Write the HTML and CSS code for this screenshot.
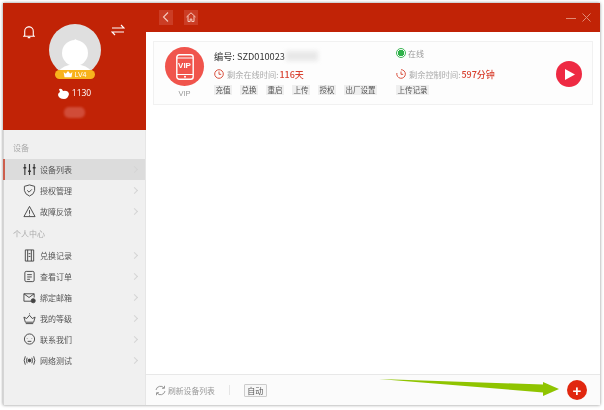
FILE: index.html
```html
<!DOCTYPE html>
<html lang="zh">
<head>
<meta charset="utf-8">
<title>设备列表</title>
<link rel="stylesheet" href="styles.css">
</head>
<body>
<div class="window">
  <aside class="sidebar">
    <div class="profile">
      <div class="profile-icons">
        <svg class="ic-bell" width="12" height="14" viewBox="0 0 14 16" fill="none" stroke="#fff" stroke-width="1.300"><path d="M2 12V7a5 5 0 0 1 10 0v5l1 1H1zM5.500 14.500h3M7 2V1"/></svg>
        <svg class="ic-swap" width="14" height="12" viewBox="0 0 14 12" fill="none" stroke="#fff" stroke-width="1.200"><path d="M1 4h12L10 1M13 8H1l3 3"/></svg>
      </div>
      <div class="avatar">
        <svg width="52" height="46" viewBox="0 0 52 46"><circle cx="26" cy="23" r="13" fill="#fff"/><path d="M26 9q3 1 3 3l-4-1z" fill="#fff"/><path d="M8 46q2-9 12-11h12q10 2 12 11z" fill="#fff"/></svg>
      </div>
      <div class="level">
        <svg width="10" height="7" viewBox="0 0 10 8" fill="#fff"><path d="M0 1l2.500 2L5 0l2.500 3L10 1 9 7H1z"/></svg>
        <span>LV4</span>
      </div>
      <div class="coins">
        <svg width="11" height="11" viewBox="0 0 11 11" fill="#fff"><path d="M1 1q3-1 4 2 5-1 6 3-1 5-5 5-5 0-6-4 0-2 2-3z"/></svg>
        <span>1130</span>
      </div>
      <div class="redacted"></div>
    </div>
    <nav class="menu">
      <div class="section">设备</div>
      <a class="item active">
        <svg class="icon" viewBox="0 0 14 14" fill="none" stroke="#333" stroke-width="1.200"><path d="M2 1v12M7 1v12M12 1v12"/><path d="M.5 5h3M5.500 9h3M10.500 5h3" stroke-width="1.600"/></svg>
        <span>设备列表</span><i class="chev"></i></a>
      <a class="item">
        <svg class="icon" viewBox="0 0 14 14" fill="none" stroke="#444"><path d="M7 1l5.500 1.500V7Q12 11 7 13 2 11 1.500 7V2.500z"/><path d="M4.500 6.800l2 2 3-3"/></svg>
        <span>授权管理</span><i class="chev"></i></a>
      <a class="item">
        <svg class="icon" viewBox="0 0 14 14" fill="none" stroke="#444"><path d="M7 1.500L13 12.500H1zM7 5.500v4M7 10.500v1"/></svg>
        <span>故障反馈</span><i class="chev"></i></a>
      <div class="section second">个人中心</div>
      <a class="item">
        <svg class="icon" viewBox="0 0 14 14" fill="none" stroke="#444"><path d="M2.500 1h9v12h-9zM5 1v12M9 1v12M6 5h2M6 8h2"/></svg>
        <span>兑换记录</span><i class="chev"></i></a>
      <a class="item">
        <svg class="icon" viewBox="0 0 14 14" fill="none" stroke="#444"><rect x="2" y="1.500" width="10" height="11" rx="1.500"/><path d="M4.500 5h5M4.500 7.500h5M4.500 10h3"/></svg>
        <span>查看订单</span><i class="chev"></i></a>
      <a class="item">
        <svg class="icon" viewBox="0 0 14 14" fill="none" stroke="#444"><path d="M9 11H1V3h11v4M1 3l5.500 4L12 3"/><circle cx="11" cy="10.500" r="2.200" fill="#444"/></svg>
        <span>绑定邮箱</span><i class="chev"></i></a>
      <a class="item">
        <svg class="icon" viewBox="0 0 14 14" fill="none" stroke="#444"><path d="M1 5.500l3 1.500 3-3.500 3 3.500 3-1.500-1.500 5.500h-9zM7 1.500v1M3 12.500h8"/></svg>
        <span>我的等级</span><i class="chev"></i></a>
      <a class="item">
        <svg class="icon" viewBox="0 0 14 14" fill="none" stroke="#444"><circle cx="7" cy="6.500" r="5.500"/><path d="M4.500 5.500v.5M9.500 5.500v.5M5 9h4"/></svg>
        <span>联系我们</span><i class="chev"></i></a>
      <a class="item">
        <svg class="icon" viewBox="0 0 14 14" fill="none" stroke="#444"><circle cx="7" cy="7" r="1.500" fill="#444"/><path d="M4.500 4Q3 7 4.500 10M9.500 4Q11 7 9.500 10M2.500 2.500Q0 7 2.500 11.500M11.500 2.500Q14 7 11.500 11.500"/></svg>
        <span>网络测试</span><i class="chev"></i></a>
    </nav>
  </aside>
  <main class="main">
    <header class="titlebar">
      <div class="nav-btns">
        <button class="nav-btn"><svg width="8" height="10" viewBox="0 0 8 10" fill="none" stroke="#f6c9bd" stroke-width="1.100"><path d="M6 .5L1.500 5 6 9.500"/></svg></button>
        <button class="nav-btn"><svg width="10" height="10" viewBox="0 0 10 10" fill="none" stroke="#f6c9bd"><path d="M.5 5L5 .8 9.500 5M2 4v5.500h2.200V7h1.600v2.500H8V4"/></svg></button>
      </div>
      <div class="win-btns">
        <svg width="10" height="10" viewBox="0 0 10 10" stroke="#e08a74"><path d="M0 5.500h10"/></svg>
        <svg width="9" height="9" viewBox="0 0 9 9" stroke="#e08a74"><path d="M.5.500l8 8M8.500.500l-8 8"/></svg>
      </div>
    </header>
    <section class="content">
      <article class="card">
        <div class="device">
          <div class="phone">
            <svg width="18" height="26" viewBox="0 0 18 26" fill="none"><rect x=".8" y=".8" width="16.400" height="24.400" rx="2.500" stroke="#fff" stroke-width="1.400"/><path d="M1 20.500h16M1 4h16" stroke="#fff"/><circle cx="9" cy="22.700" r="1" fill="#fff"/></svg>
            <span class="vip-mark">VIP</span>
          </div>
          <div class="vip-label">VIP</div>
        </div>
        <div class="col-a">
          <div class="serial">编号: SZD010023<span class="mask"></span></div>
          <div class="timer">
            <svg class="clock" viewBox="0 0 10 10" fill="none" stroke="#d9513f"><circle cx="5" cy="5" r="4.300"/><path d="M5 2.500V5.300H7.200"/></svg>
            <span>剩余在线时间:</span><b>116天</b>
          </div>
          <div class="tags">
            <span class="tag">充值</span><span class="tag">兑换</span><span class="tag">重启</span><span class="tag">上传</span><span class="tag">授权</span><span class="tag">出厂设置</span>
          </div>
        </div>
        <div class="col-b">
          <div class="status"><i class="dot"></i><span>在线</span></div>
          <div class="timer">
            <svg class="clock" viewBox="0 0 10 10" fill="none" stroke="#d9513f"><path d="M5 .7A4.300 4.300 0 1 1 .9 4"/><path d="M5 2.500V5.300H7.200"/></svg>
            <span>剩余控制时间:</span><b>597分钟</b>
          </div>
          <div class="tags"><span class="tag">上传记录</span></div>
        </div>
        <button class="play"><svg width="10" height="11" viewBox="0 0 10 11" fill="#fff"><path d="M0 0l10 5.500L0 11z"/></svg></button>
      </article>
    </section>
    <footer class="footer">
      <div class="refresh">
        <svg width="11" height="11" viewBox="0 0 11 11" fill="none" stroke="#999"><path d="M1 5a4.500 4.500 0 0 1 8-2M10 6a4.500 4.500 0 0 1-8 2M9.500 .8V3.300H7M1.500 10.200V7.700H4"/></svg>
        <span>刷新设备列表</span>
      </div>
      <span class="divider"></span>
      <span class="auto">自动</span>
      <button class="add">+</button>
    </footer>
  </main>
  <svg class="arrow" width="182" height="20" viewBox="0 0 182 20"><path d="M0 0L164 5.500V3L180 10 164 17V13.500Z" fill="#8fc400"/></svg>
</div>
</body>
</html>
```

FILE: styles.css
```css
* { box-sizing: border-box; }
html, body { margin: 0; height: 100%; }
body {
  background: #fff;
  padding: 3px 4px 5px 3px;
  font-family: "Noto Sans CJK SC", "Liberation Sans", sans-serif;
  overflow: hidden;
}
.window {
  position: relative;
  display: flex;
  height: 402px;
  background: #fff;
  box-shadow: 0 0 3px #8b8b8b;
  filter: blur(.25px);
}
.sidebar {
  width: 143px;
  flex: none;
  background: #f0f0f0;
  display: flex;
  flex-direction: column;
}
.profile {
  height: 127px;
  background: #c12306;
  display: flex;
  flex-direction: column;
  align-items: center;
  position: relative;
  padding-top: 21px;
}
.profile-icons {
  position: absolute;
  left: 0;
  right: 0;
  top: 0;
}
.ic-bell { position: absolute; left: 20px; top: 22px; }
.ic-swap { position: absolute; left: 108px; top: 21px; }
.avatar {
  width: 52px;
  height: 52px;
  border-radius: 50%;
  background: #dfdfdf;
  display: flex;
  align-items: flex-end;
  overflow: hidden;
}
.level {
  margin-top: -6px;
  z-index: 1;
  width: 40px;
  height: 9px;
  border-radius: 5px;
  background: #f8b31c;
  color: #fff;
  font: 7px/9px "Liberation Sans", sans-serif;
  display: flex;
  align-items: center;
  justify-content: center;
  gap: 2px;
}
.coins {
  margin-top: 8px;
  display: flex;
  align-items: center;
  gap: 3px;
  color: #fff;
  font: 8.500px/12px "Open Sans", sans-serif;
}
.redacted {
  width: 21px;
  height: 11px;
  margin-top: 8px;
  border-radius: 5px;
  background: #d04c38;
  filter: blur(1.200px);
}
.menu {
  flex: 1;
  padding-top: 11px;
  border-right: 1px solid #e6e6e6;
  border-left: 1px solid #d5d5d5;
}
.section {
  height: 15px;
  padding-left: 9px;
  color: #aaa;
  font-size: 8px;
  line-height: 14px;
}
.section.second {
  margin-top: 5px;
  margin-bottom: 1px;
}
.item {
  display: flex;
  align-items: center;
  height: 21px;
  padding-left: 19px;
  color: #555;
  font-size: 8px;
  position: relative;
}
.section + .item { margin-top: 3px; }
.item.active {
  background: #dcdcdc;
  box-shadow: inset 2px 0 #cd5f4d;
  margin-left: -1px;
  padding-left: 20px;
}
.icon {
  width: 13px;
  height: 13px;
  margin-right: 4px;
  flex: none;
}
.chev {
  position: absolute;
  right: 8px;
  top: 8px;
  width: 5px;
  height: 5px;
  border-top: 1px solid #d4d4d4;
  border-right: 1px solid #d4d4d4;
  transform: rotate(45deg);
}
.main {
  flex: 1;
  display: flex;
  flex-direction: column;
  min-width: 0;
}
.titlebar {
  height: 29px;
  background: #c12306;
  display: flex;
  align-items: center;
  justify-content: space-between;
  padding: 0 9px 0 13px;
  flex: none;
}
.nav-btns { display: flex; gap: 11px; margin-top: -1px; }
.nav-btn {
  width: 14px;
  height: 15px;
  padding: 0;
  border: 0;
  background: #cb3d25;
  display: flex;
  align-items: center;
  justify-content: center;
}
.win-btns { display: flex; align-items: center; gap: 6px; }
.content {
  flex: 1;
  padding: 9px 6px 0 7px;
  background: #fff;
}
.card {
  height: 64px;
  width: 440px;
  border: 1px solid #f1f1f1;
  background: #fdfdfd;
  display: flex;
  position: relative;
}
.device {
  width: 47px;
  flex: none;
  margin-left: 11px;
  padding-top: 5px;
}
.phone {
  width: 39px;
  height: 39px;
  border-radius: 50%;
  background: #f0544c;
  display: flex;
  align-items: center;
  justify-content: center;
  position: relative;
}
.vip-mark {
  position: absolute;
  left: 0;
  right: 0;
  top: 14px;
  text-align: center;
  color: #fff;
  font: bold 8px/10px "Liberation Sans", sans-serif;
}
.vip-label {
  width: 39px;
  text-align: center;
  color: #999;
  font: 7.500px/10px "Liberation Sans", sans-serif;
  margin-top: 3px;
}
.col-a {
  width: 182px;
  flex: none;
  margin-left: 2px;
  padding-top: 7px;
}
.col-b {
  flex: none;
  padding-top: 4px;
  width: 150px;
}
.serial {
  height: 14px;
  color: #333;
  font-size: 9.200px;
  line-height: 14px;
  position: relative;
  white-space: nowrap;
}
.mask {
  position: absolute;
  left: 72px;
  top: 2px;
  width: 32px;
  height: 10px;
  background: #e8e8e8;
  filter: blur(2px);
}
.status {
  height: 14px;
  display: flex;
  align-items: center;
  gap: 2px;
  color: #999;
  font-size: 8px;
}
.dot {
  width: 10px;
  height: 10px;
  border-radius: 50%;
  border: 1px solid #3eb655;
  background: radial-gradient(circle, #2fb24a 55%, #fff 60%);
}
.timer {
  display: flex;
  align-items: center;
  height: 12px;
  margin-top: 5px;
  color: #aaa;
  font-size: 8.200px;
  white-space: nowrap;
}
.col-b .timer { margin-top: 8px; }
.timer b {
  color: #d8402f;
  font-size: 9px;
  font-weight: 500;
  margin-left: 1px;
}
.clock {
  width: 10px;
  height: 10px;
  margin-right: 3px;
  flex: none;
}
.tags {
  display: flex;
  gap: 8px;
  margin-top: 5px;
}
.tag {
  height: 10px;
  padding: 0 1.500px;
  background: #efefef;
  color: #555;
  font-size: 7.500px;
  line-height: 10px;
  white-space: nowrap;
}
.play {
  position: absolute;
  right: 10px;
  top: 19px;
  width: 26px;
  height: 26px;
  border: 0;
  padding: 0 0 0 2px;
  border-radius: 50%;
  background: #ee2a43;
  display: flex;
  align-items: center;
  justify-content: center;
}
.footer {
  height: 31px;
  flex: none;
  border-top: 1px solid #e8e8e8;
  display: flex;
  align-items: center;
  padding: 0 13px 0 9px;
  background: #fbfbfb;
}
.refresh {
  display: flex;
  align-items: center;
  gap: 2px;
  color: #999;
  font-size: 7.800px;
}
.divider {
  width: 1px;
  height: 10px;
  background: #e5e5e5;
  margin: 0 14px;
}
.auto {
  border: 1px solid #ccc;
  background: #f7f7f7;
  color: #555;
  width: 23px;
  height: 13px;
  font-size: 8px;
  line-height: 11px;
  text-align: center;
  border-radius: 1px;
}
.add {
  margin-left: auto;
  width: 20px;
  height: 20px;
  padding: 0;
  border: 0;
  border-radius: 50%;
  background: #e1270f;
  color: #fff;
  font: bold 15px/19px "Liberation Sans", sans-serif;
}
.arrow {
  position: absolute;
  left: 376px;
  top: 376px;
}
```
